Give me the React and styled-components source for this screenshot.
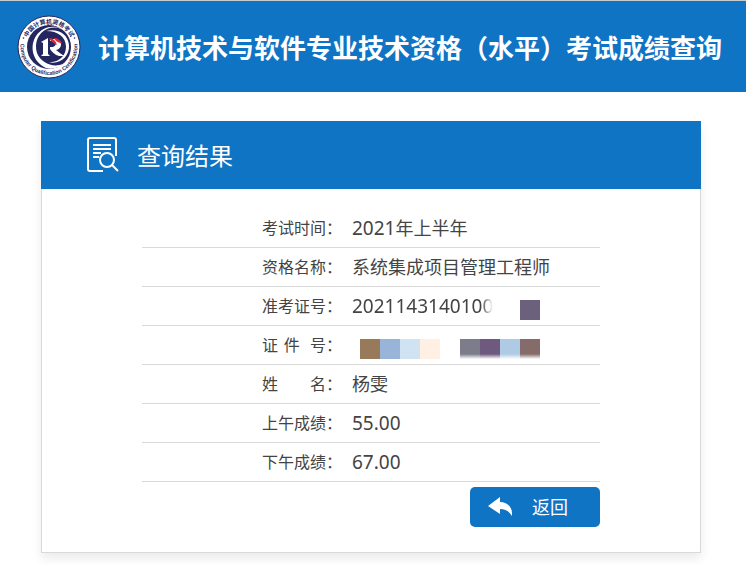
import styled, { createGlobalStyle } from 'styled-components';

const GlobalStyle = createGlobalStyle`
    * {
        box-sizing: border-box;
    }
    body {
        margin: 0;
        background: #fff;
        color: #444;
        font-family: 'Noto Sans CJK SC', sans-serif;
    }
`;

const Header = styled.header`
    display: flex;
    align-items: center;
    gap: 16px;
    height: 92px;
    padding: 0 16px;
    border-top: 1px solid #c4ccd0;
    background: #1074c5;
`;

const LogoSvg = styled.svg`
    flex: none;
    width: 66px;
    height: 66px;
`;

const Title = styled.h1`
    margin: 0;
    color: #fff;
    font-size: 26px;
    font-weight: 700;
    line-height: 36px;
    white-space: nowrap;
`;

const Main = styled.main`
    padding: 29px 45px 12px 41px;
`;

const Card = styled.section`
    border: 1px solid #d9d9d9;
    border-top: 0;
    box-shadow: 0 6px 10px rgba(0, 0, 0, 0.08);
`;

const CardHeader = styled.div`
    display: flex;
    align-items: center;
    gap: 16px;
    height: 68px;
    margin: 0 -1px;
    padding: 0 44px;
    background: #1074c5;
`;

const CardTitle = styled.h2`
    margin: 0;
    color: #fff;
    font-size: 24px;
    font-weight: 400;
    line-height: 36px;
`;

const CardBody = styled.div`
    max-width: 458px;
    margin: 0 auto;
    padding: 20px 0 25px;
`;

const ResultTable = styled.table`
    width: 100%;
    border-collapse: separate;
    border-spacing: 0;
    th,
    td {
        height: 39px;
        padding: 0;
        border-bottom: 1px solid #d9d9d9;
        font-weight: 400;
        line-height: 36px;
    }
    th {
        width: 200px;
        font-size: 16px;
    }
    td {
        padding-left: 10px;
        font-size: 18px;
    }
`;

const Label = styled.div`
    display: flex;
    justify-content: flex-end;
    height: 38px;
`;

const LabelText = styled.span`
    width: 64px;
    text-align-last: justify;
`;

const Value = styled.div`
    display: flex;
    height: 38px;
`;

const Digits = styled.span`
    font-family: 'Noto Sans', 'Noto Sans CJK SC', sans-serif;
    font-size: 19px;
    line-height: 38px;
    ${({ $faded }) => $faded && 'mask-image: linear-gradient(to left, transparent, #000 12px);'}
`;

const Mosaic = styled.span`
    display: flex;
    align-self: flex-end;
    margin-left: ${({ $indent }) => $indent}px;
    padding-bottom: 5px;
`;

const Tile = styled.span`
    width: 20px;
    height: 20px;
    background: ${({ $color }) => $color};
    ${({ $soft }) => $soft && 'mask-image: linear-gradient(to top, transparent, #000 5px);'}
`;

const Actions = styled.div`
    display: flex;
    justify-content: flex-end;
    padding-top: 5px;
`;

const BackButton = styled.button`
    display: flex;
    align-items: center;
    gap: 20px;
    width: 130px;
    height: 40px;
    padding: 0 18px 2px;
    border: 0;
    border-radius: 5px;
    background: #1074c5;
    color: #fff;
    font-family: inherit;
    font-size: 18px;
    cursor: pointer;
`;

const results = [
    { label: '考试时间', digits: '2021', text: '年上半年' },
    { label: '资格名称', text: '系统集成项目管理工程师' },
    { label: '准考证号', digits: '2021143140100', faded: true, indent: 27, tiles: ['#6b617c'] },
    {
        label: '证 件 \u00a0号',
        indent: 8,
        tiles: ['#98795a', '#98b4d9', '#d0e3f3', '#fff0e3', 'transparent', '#7c7c8a', '#6d5a7e', '#afcae4', '#856c6b'],
    },
    { label: '姓 名', text: '杨雯' },
    { label: '上午成绩', digits: '55.00' },
    { label: '下午成绩', digits: '67.00' },
];

function Logo() {
    return (
        <LogoSvg viewBox="0 0 66 66" aria-hidden="true">
            <defs>
                <path id="ringTop" d="M 9.5 33 A 23.5 23.5 0 0 1 56.5 33" />
                <path id="ringBottom" d="M 6.5 22 A 28.5 28.5 0 1 0 59.5 22" />
            </defs>
            <circle cx="33" cy="33" r="31" fill="#fff" stroke="#26265c" strokeWidth="1" />
            <circle cx="33" cy="33" r="22" fill="#23265f" />
            <text fill="#23265f" fontSize="6" fontWeight="700" textAnchor="middle">
                <textPath href="#ringTop" startOffset="50%">
                    中国计算机资格考试
                </textPath>
            </text>
            <text
                fill="#23265f"
                fontSize="5.5"
                fontWeight="700"
                fontFamily="Liberation Sans, sans-serif"
                textAnchor="middle"
            >
                <textPath href="#ringBottom" startOffset="50%">
                    Computer Qualification Certification
                </textPath>
            </text>
            <circle cx="7.5" cy="24" r="0.8" fill="#23265f" />
            <circle cx="58.5" cy="24" r="0.8" fill="#23265f" />
            {/* swooshes */}
            <path
                d="M52 20 C44 10 28 10 20 22 C13 33 17 48 30 54 C37 56 44 53 47 50 C37 54 25 49 21 39 C18 29 22 19 31 15 C39 12 47 14 52 20 Z"
                fill="#fff"
            />
            <path
                d="M30 17 C42 14 52 20 53 31 C54 43 43 51 33 48 C42 49 50 42 50 33 C50 23 42 17 30 17 Z"
                fill="#fff"
            />
            {/* letter mark and birds */}
            <path d="M25 28 L32 24 V40 L34 42 H25 L27 40 V29 Z" fill="#fff" />
            <path d="M34 25 H38 C47 25 47 35 40 36 C43 38 46 41 49 42 H43 C39 41 36 38 34 35 V33 C40 34 42 28 37 27 H34 Z" fill="#fff" />
            <path d="M33 24 C37 24 40 27 41 31 C38 29 35 28 33 24 Z M38 24 C42 24 44 26 46 29 C43 29 40 28 38 24 Z" fill="#e02b38" />
        </LogoSvg>
    );
}

function ReportIcon() {
    return (
        <svg width="36" height="38" viewBox="0 0 36 38" fill="none" stroke="#fff" strokeWidth="2" aria-hidden="true">
            <path d="M18 35 H5 Q3 35 3 33 V4 Q3 2 5 2 H29 Q31 2 31 4 V20" />
            <path d="M8 9 H26 M8 13 H26 M8 17 H16 M8 21 H14" />
            <circle cx="22" cy="24" r="7" />
            <path d="M27 29 L33 35" />
        </svg>
    );
}

function BackIcon() {
    return (
        <svg width="24" height="20" viewBox="0 0 24 20" fill="#fff" aria-hidden="true">
            <path d="M0 10 L12 1 V6 C19 6 25 11 24 20 C21 15 17 13 12 13 V18 Z" />
        </svg>
    );
}

export default function App() {
    return (
        <>
            <GlobalStyle />
            <Header>
                <Logo />
                <Title>计算机技术与软件专业技术资格（水平）考试成绩查询</Title>
            </Header>
            <Main>
                <Card>
                    <CardHeader>
                        <ReportIcon />
                        <CardTitle>查询结果</CardTitle>
                    </CardHeader>
                    <CardBody>
                        <ResultTable>
                            <tbody>
                                {results.map((item) => (
                                    <tr key={item.label}>
                                        <th scope="row">
                                            <Label>
                                                <LabelText>{item.label}</LabelText>：
                                            </Label>
                                        </th>
                                        <td>
                                            <Value>
                                                {item.digits && <Digits $faded={item.faded}>{item.digits}</Digits>}
                                                {item.text}
                                                {item.tiles && (
                                                    <Mosaic $indent={item.indent}>
                                                        {item.tiles.map((color, i) => (
                                                            <Tile key={i} $color={color} $soft={i > 4} />
                                                        ))}
                                                    </Mosaic>
                                                )}
                                            </Value>
                                        </td>
                                    </tr>
                                ))}
                            </tbody>
                        </ResultTable>
                        <Actions>
                            <BackButton type="button">
                                <BackIcon />
                                返回
                            </BackButton>
                        </Actions>
                    </CardBody>
                </Card>
            </Main>
        </>
    );
}
